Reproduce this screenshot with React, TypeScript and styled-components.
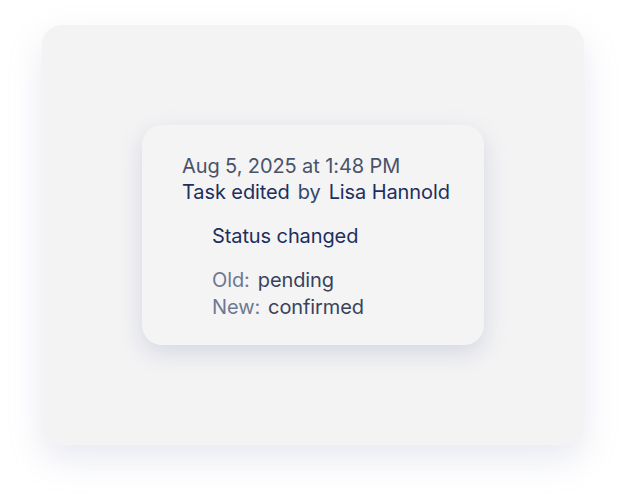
import React from "react";
import styled, { createGlobalStyle } from "styled-components";

const Global = createGlobalStyle`
  html, body { margin: 0; padding: 0; background: #ffffff; }
  body { font-family: Inter, "Open Sans", sans-serif; -webkit-font-smoothing: antialiased; }
`;

const Page = styled.div`
  width: 626px;
  height: 504px;
  box-sizing: border-box;
  padding: 25px 42px 59px 42px;
`;

const Panel = styled.div`
  width: 542px;
  height: 420px;
  border-radius: 20px;
  background: #f3f3f4;
  box-shadow: 0 14px 34px rgba(150, 155, 190, 0.22);
  display: flex;
  align-items: center;
  justify-content: center;
`;

const Card = styled.div`
  width: 342px;
  height: 220px;
  box-sizing: border-box;
  border-radius: 20px;
  background: #f4f4f5;
  box-shadow: 0 8px 22px rgba(150, 155, 190, 0.3);
  padding: 28px 40px;
  display: flex;
  flex-direction: column;
`;

const Line = styled.div<{ $color?: string; $indent?: number; $mt?: number }>`
  font-size: 20px;
  line-height: 26px;
  letter-spacing: -0.1px;
  color: ${(p) => p.$color || "#1c2f5e"};
  margin-left: ${(p) => p.$indent || 0}px;
  margin-top: ${(p) => p.$mt || 0}px;
  white-space: nowrap;
  display: flex;
  gap: 8px;
`;

const Muted = styled.span`
  color: #6f7891;
`;

const By = styled.span`
  color: #34456b;
`;

const Value = styled.span`
  color: #38425c;
`;

export default function App() {
  return (
    <>
      <Global />
      <Page>
        <Panel>
          <Card>
            <Line $color="#4a5268">Aug 5, 2025 at 1:48 PM</Line>
            <Line>
              <span>Task edited</span>
              <By>by</By>
              <span>Lisa Hannold</span>
            </Line>
            <Line $indent={30} $mt={18}>Status changed</Line>
            <Line $indent={30} $mt={18}>
              <Muted>Old:</Muted>
              <Value>pending</Value>
            </Line>
            <Line $indent={30} $mt={1}>
              <Muted>New:</Muted>
              <Value>confirmed</Value>
            </Line>
          </Card>
        </Panel>
      </Page>
    </>
  );
}
